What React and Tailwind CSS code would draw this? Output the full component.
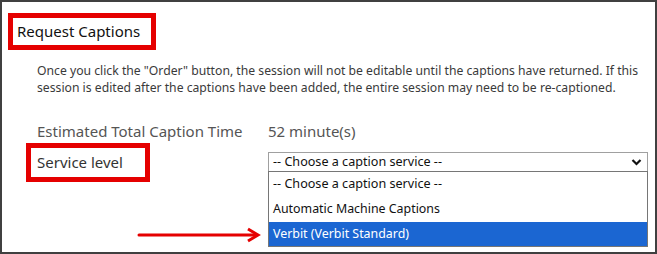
import React from "react";

export default function App() {
  return (
    <div className="w-[657px] h-[254px] bg-white border-2 border-[#404040] relative overflow-hidden font-['Noto_Sans',sans-serif]">
      <div className="pt-[11px] pl-[6px]">
        <div className="w-[148px] h-[37px] border-[5px] border-[#e50000] flex items-center pl-[4px]">
          <span className="text-[15px] text-[#111] leading-none">Request Captions</span>
        </div>
      </div>
      <p className="ml-[35px] mr-[8px] mt-[12px] text-[12.2px] leading-[17px] text-[#3a3a3a]">
        Once you click the "Order" button, the session will not be editable until the captions have returned. If this session is edited after the captions have been added, the entire session may need to be re-captioned.
      </p>
      <div className="mt-[25px] flex items-center h-[20px]">
        <span className="ml-[35px] w-[231px] text-[15px] text-[#555]">Estimated Total Caption Time</span>
        <span className="text-[15px] text-[#555]">52 minute(s)</span>
      </div>
      <div className="mt-[2px] flex items-start">
        <div className="ml-[24px] w-[124px] h-[39px] border-[5px] border-[#e50000] flex items-center pl-[6px]">
          <span className="text-[15px] text-[#333] leading-none">Service level</span>
        </div>
        <div className="ml-[118px] mt-[9px] w-[380px] relative">
          <div className="h-[20px] border border-[#a0a0a0] flex items-center justify-between pl-[4px] pr-[5px]">
            <span className="text-[12.6px] text-[#111] leading-none">-- Choose a caption service --</span>
            <svg width="11" height="8" viewBox="0 0 11 8">
              <path d="M1.5 2 L5.5 6 L9.5 2" fill="none" stroke="#111" strokeWidth="2.2" />
            </svg>
          </div>
          <div className="absolute left-0 top-[19px] w-[380px] border border-[#767676] bg-white">
            <div className="h-[25px] flex items-center pl-[4px] text-[12.6px] text-[#111]">-- Choose a caption service --</div>
            <div className="h-[25px] flex items-center pl-[4px] text-[12.4px] text-[#111]">Automatic Machine Captions</div>
            <div className="h-[24px] flex items-center pl-[4px] text-[12.4px] text-white bg-[#1b66d2]">Verbit (Verbit Standard)</div>
          </div>
        </div>
      </div>
      <svg className="absolute left-[135px] top-[223px]" width="130" height="20" viewBox="0 0 130 20">
        <line x1="2" y1="10" x2="118" y2="10" stroke="#e50000" strokeWidth="3" strokeLinecap="round" />
        <path d="M111 4 L121 10 L111 16" fill="none" stroke="#e50000" strokeWidth="3" strokeLinejoin="miter" />
      </svg>
    </div>
  );
}
